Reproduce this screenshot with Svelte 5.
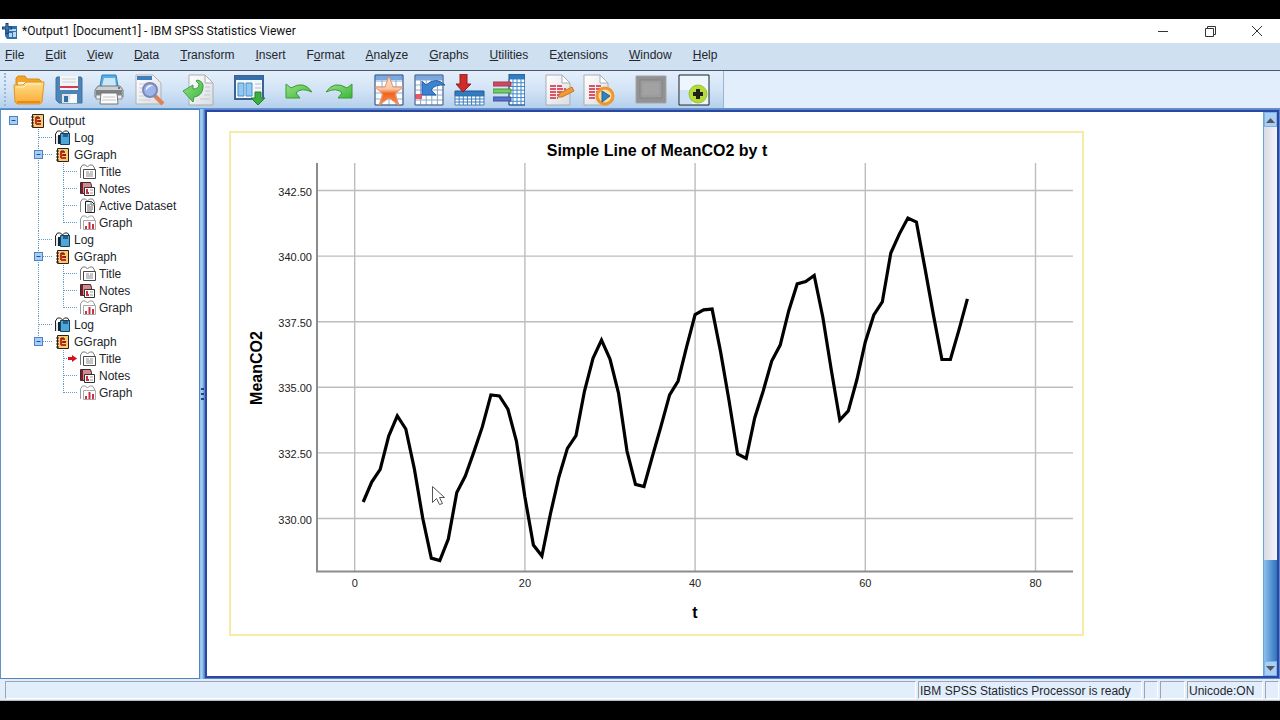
<script lang="ts">
  type Kind = 'book' | 'log' | 'title' | 'notes' | 'dataset' | 'graph';
  type Row = { label: string; kind: Kind; depth: number; last?: boolean; lastGroup?: boolean; current?: boolean };

  // the number is the index of the underlined letter
  const menus: [string, number][] = [
    ['File', 0], ['Edit', 0], ['View', 0], ['Data', 0], ['Transform', 0], ['Insert', 0], ['Format', 1],
    ['Analyze', 0], ['Graphs', 0], ['Utilities', 0], ['Extensions', 1], ['Window', 0], ['Help', 0],
  ];

  const toolGroups = [
    [['open', 'Open'], ['save', 'Save'], ['print', 'Print'], ['preview', 'Print preview']],
    [['export', 'Export']],
    [['recall', 'Recall dialogs']],
    [['undo', 'Undo'], ['redo', 'Redo']],
    [['goto', 'Go to data'], ['case', 'Go to case'], ['insert', 'Go to variable'], ['variables', 'Variables']],
    [['script', 'New script'], ['run', 'Run script']],
    [['select', 'Select last output'], ['designate', 'Designate window']],
  ];

  const rows: Row[] = [
    { label: 'Output', kind: 'book', depth: 0 },
    { label: 'Log', kind: 'log', depth: 1 },
    { label: 'GGraph', kind: 'book', depth: 1 },
    { label: 'Title', kind: 'title', depth: 2 },
    { label: 'Notes', kind: 'notes', depth: 2 },
    { label: 'Active Dataset', kind: 'dataset', depth: 2 },
    { label: 'Graph', kind: 'graph', depth: 2, last: true },
    { label: 'Log', kind: 'log', depth: 1 },
    { label: 'GGraph', kind: 'book', depth: 1 },
    { label: 'Title', kind: 'title', depth: 2 },
    { label: 'Notes', kind: 'notes', depth: 2 },
    { label: 'Graph', kind: 'graph', depth: 2, last: true },
    { label: 'Log', kind: 'log', depth: 1 },
    { label: 'GGraph', kind: 'book', depth: 1, last: true },
    { label: 'Title', kind: 'title', depth: 2, lastGroup: true, current: true },
    { label: 'Notes', kind: 'notes', depth: 2, lastGroup: true },
    { label: 'Graph', kind: 'graph', depth: 2, last: true, lastGroup: true },
  ];

  const indent = [28, 53, 78];

  const co2 = [
    330.63, 331.39, 331.87, 333.14, 333.91, 333.41, 331.9, 330.0, 328.49, 328.4, 329.22, 330.99,
    331.62, 332.53, 333.49, 334.71, 334.67, 334.17, 332.95, 330.82, 328.99, 328.57, 330.17, 331.58,
    332.67, 333.16, 334.86, 336.1, 336.8, 336.08, 334.78, 332.57, 331.3, 331.22, 332.38, 333.53,
    334.71, 335.24, 336.54, 337.77, 337.95, 337.98, 336.35, 334.48, 332.46, 332.29, 333.83, 334.86,
    336.0, 336.61, 337.91, 338.94, 339.03, 339.26, 337.68, 335.66, 333.75, 334.1, 335.28, 336.73,
    337.76, 338.25, 340.12, 340.84, 341.45, 341.3, 339.55, 337.76, 336.06, 336.06, 337.18, 338.37,
  ];

  const xTicks = [0, 20, 40, 60, 80];
  const yTicks = [342.5, 340, 337.5, 335, 332.5, 330];
  const sx = (t: number) => 123.7 + t * 8.51;
  const sy = (v: number) => 385.5 - (v - 330) * 26.24;
  const line = co2.map((v, i) => `${sx(i + 1).toFixed(1)},${sy(v).toFixed(1)}`).join(' ');
</script>

{#snippet grid(x: number, y: number, w: number, h: number, cols: number, rws: number, stroke: string)}
  {#each Array(cols + 1) as _, i}
    <path d="M{x + (w * i) / cols} {y}v{h}" {stroke} fill="none" />
  {/each}
  {#each Array(rws + 1) as _, i}
    <path d="M{x} {y + (h * i) / rws}h{w}" {stroke} fill="none" />
  {/each}
{/snippet}

{#snippet page()}
  <path d="M6 1h16l8 8v22H6z" fill="url(#paper)" stroke="#a9adb2" />
  <path d="M22 1v8h8z" fill="#fafafa" stroke="#a9adb2" />
{/snippet}

{#snippet toolIcon(name: string)}
  <svg width="32" height="32" viewBox="0 0 32 32" aria-hidden="true">
    {#if name === 'open'}
      <path d="M3 25V4l2-2h7l2 3h12l3 3v17z" fill="#f2a32a" stroke="#d98a1c" />
      <path d="M5 8h22v5H5z" fill="#fff3cf" />
      <path d="M1 11h9l3-3h18l-2 20-2 2H4l-2-2z" fill="url(#folder)" stroke="#e0952a" />
      <path d="M3 13h8l3-3h14" fill="none" stroke="#fff1c0" />
      <path d="M4 28h23" stroke="#e58a1d" stroke-width="2" />
    {:else if name === 'save'}
      <path d="M4 3h24l1 1v25H6l-3-3V4z" fill="#4d84b6" stroke="#44719c" />
      <path d="M7 2h18v14H7z" fill="#f4f5f7" />
      <path d="M9 5h14M9 8h14" stroke="#ccd3da" />
      <path d="M7 12h18v2H7z" fill="#d33b58" />
      <path d="M9 20h15v9H9z" fill="#dfe3e6" />
      <path d="M11 22h4v6h-4z" fill="#36709f" />
      <path d="M18 20h6v9h-8z" fill="#fafafa" />
    {:else if name === 'print'}
      <path d="M9 1h14l2 11H7z" fill="#58aee0" stroke="#2e83bd" />
      <path d="M11 4h11l1 8H9z" fill="#c9e8fa" />
      <path d="M5 12h22l3 4v7H2v-7z" fill="#cdcfd1" stroke="#74787c" />
      <path d="M3 16h26v5H3z" fill="#7d8286" />
      <path d="M3 21h26v4H3z" fill="#eceded" stroke="#8a8d90" />
      <path d="M8 19h16l1 11H7z" fill="#fbfbfb" stroke="#777" />
      <path d="M10 23h12M9 26h14" stroke="#c3c5c7" />
      <circle cx="26" cy="14" r="1" fill="#555" />
    {:else if name === 'preview'}
      <path d="M3 1h17l8 8v21H3z" fill="url(#paper)" stroke="#adb1b5" />
      <path d="M4 2h15v4H4z" fill="#3e7fc0" />
      <path d="M6 10h7M6 14h4M6 18h4M6 22h6M6 26h12" stroke="#c9ced4" />
      <path d="M22 22l8 8" stroke="#e37f54" stroke-width="4" />
      <path d="M20 20l3 3" stroke="#8c93ac" stroke-width="3" />
      <circle cx="17" cy="16" r="7" fill="#9bb6ed" stroke="#8087b4" stroke-width="2" />
      <path d="M13 14q3-5 7-2-4 0-7 5z" fill="#e8f1ff" />
    {:else if name === 'export'}
      {@render page()}
      <path d="M22 13h5M22 17h5M21 21h6M17 25h10" stroke="#c5c9cd" />
      <path d="M0 17l10-6v4q6 0 6-5l-3-3 1-1q7 1 6 8-1 8-9 9l-1 5z" fill="url(#green)" stroke="#3f9d48" />
    {:else if name === 'recall'}
      <path d="M2 2h28v23H2z" fill="#f4f8fd" stroke="#3e6290" stroke-width="2" />
      <path d="M2 2h28v4H2z" fill="#376fac" />
      <path d="M5 9h6v13H5zM13 9h6v13h-6z" fill="#8fc9f3" stroke="#4b8dc6" />
      <path d="M22 10h6M22 14h6" stroke="#a9bdd2" />
      <path d="M22 18h6v6h4l-7 7-7-7h4z" fill="#3dae40" stroke="#227d2a" />
    {:else if name === 'undo'}
      <path d="M3 10v14h14l-4-5q5-6 16-1-8-12-21-4z" fill="url(#green)" stroke="#3a9a32" />
    {:else if name === 'redo'}
      <path d="M29 10v14H15l4-5q-5-6-16-1 8-12 21-4z" fill="url(#green)" stroke="#3a9a32" />
    {:else if name === 'goto'}
      <path d="M2 1h28v30H2z" fill="#fff" />
      <path d="M2 1h28v5H2z" fill="#76a8e4" />
      {@render grid(2, 1, 28, 30, 4, 5, '#8fabd0')}
      <path d="M2 1h28v30H2z" fill="none" stroke="#405b83" />
      <path d="M16 2l4 11h10l-8 7 4 11-10-7-10 7 4-11-8-7h10z" fill="url(#star)" stroke="#e89163" />
    {:else if name === 'case'}
      <path d="M2 1h28v30H2z" fill="#fff" />
      <path d="M2 1h28v5H2z" fill="#76a8e4" />
      {@render grid(2, 1, 28, 30, 5, 6, '#8ba6ca')}
      <path d="M2 20h7v5H2z" fill="#ed5266" />
      <path d="M2 1h28v30H2z" fill="none" stroke="#526b91" />
      <path d="M9 7v14h14l-5-5q4-6 14-5-9-9-19 0z" fill="#3c82cf" stroke="#2860a9" />
    {:else if name === 'insert'}
      <path d="M2 17h29v5H2z" fill="#317bc0" stroke="#24568d" />
      <path d="M2 22h29v9H2z" fill="#fff" />
      {@render grid(2, 22, 29, 9, 7, 3, '#3c7fbc')}
      <path d="M7 0h7v10h4l-8 8-7-8h4z" fill="#cf2c2a" stroke="#8f1f20" />
    {:else if name === 'variables'}
      <path d="M16 0h16v31H16z" fill="#fff" />
      {@render grid(16, 5, 16, 26, 4, 7, '#3c87cb')}
      <path d="M16 0h16v5H16z" fill="#317bc0" />
      <path d="M16 0h16v31H16z" fill="none" stroke="#24568d" />
      <path d="M0 8h18v4H0z" fill="#d64460" stroke="#963f50" />
      <path d="M0 15h18v4H0z" fill="#72cd62" stroke="#4d9044" />
      <path d="M0 23h18v4H0z" fill="#5273cd" stroke="#3e539a" />
    {:else if name === 'script'}
      <path d="M3 1h16l8 8v22H3z" fill="url(#paper)" stroke="#a9adb2" />
      <path d="M19 1v8h8z" fill="#fff" stroke="#a9adb2" />
      <path d="M7 12h12M7 15h16M7 18h12M7 21h15M7 24h8" stroke="#dc5366" stroke-width="2" stroke-dasharray="6 1" />
      <path d="M15 23l2-4 12-6 2 4-12 6z" fill="#f39a32" stroke="#c87628" />
    {:else if name === 'run'}
      <path d="M1 1h16l8 8v22H1z" fill="url(#paper)" stroke="#a9adb2" />
      <path d="M17 1v8h8z" fill="#fff" stroke="#a9adb2" />
      <path d="M6 12h12M6 15h12M6 18h8M6 21h6M6 24h6" stroke="#dc5366" stroke-width="2" stroke-dasharray="6 1" />
      <circle cx="22" cy="22" r="8" fill="#f8dba3" stroke="#ed962c" stroke-width="3" />
      <path d="M19 17l8 5-8 6z" fill="#2e82bd" stroke="#246494" />
    {:else if name === 'select'}
      <path d="M1 2h30v27H1z" fill="#929292" stroke="#a5a5a5" />
      <path d="M5 6h22v18H5z" fill="#9c9c9c" stroke="#848484" />
      <path d="M8 9h16v12H8z" fill="#a2a2a2" />
    {:else if name === 'designate'}
      <path d="M1 1h30v30H1z" fill="#edf5fd" stroke="#17202b" />
      <path d="M2 16h12v14H2z" fill="#cfe2f5" />
      <circle cx="20" cy="20" r="9" fill="#b5dc36" stroke="#9bbf38" />
      <path d="M18 15h4v3h3v4h-3v3h-4v-3h-3v-4h3z" fill="#1d2118" />
    {/if}
  </svg>
{/snippet}

{#snippet binder(stroke: string)}
  <path d="M1.500 14V4l2-3h3l2 2 2-2h3l2 3v2" fill="#fff" {stroke} />
{/snippet}

{#snippet treeIcon(kind: Kind)}
  <svg width="17" height="16" viewBox="0 0 17 16" aria-hidden="true">
    {#if kind === 'book'}
      <path d="M3.500 1.500h11v13h-11z" fill="#f8cb74" stroke="#2b2417" />
      <path d="M2 4h3M2 7h3M2 10h3M2 13h3" stroke="#2b2417" />
      <path d="M7 4v7M7 5h4M7 8h5M7 11h5" fill="none" stroke="#c4301f" stroke-width="2" />
      <path d="M7 4h3M9 8h3" stroke="#3b2017" />
    {:else if kind === 'log'}
      {@render binder('#222')}
      <path d="M2 6h4v8H2z" fill="#d6e9f4" />
      <path d="M6.500 3.500h9v11h-9z" fill="#4fa7d8" stroke="#16425f" />
      <path d="M9 4h5v3H9z" fill="#24618c" />
      <path d="M5 5v9" stroke="#16252e" stroke-width="2" />
    {:else if kind === 'title'}
      {@render binder('#777')}
      <path d="M4.500 5.500h12v9h-12z" fill="#fff" stroke="#4a4a4a" />
      <path d="M7 8h3M11 8h3M7 10h7M7 12h7" stroke="#8a8a8a" />
    {:else if kind === 'notes'}
      <path d="M1.500 1.500h10l1 3v8h-11z" fill="#d58a90" stroke="#3a2a2d" />
      <path d="M3 2v11" stroke="#7c1e29" stroke-width="2" />
      <path d="M5.500 6.500h10v8h-10z" fill="#fff" stroke="#333" />
      <path d="M8 8v4M7 12h3" stroke="#d02c3a" stroke-width="2" />
      <path d="M11 9h3M11 12h3" stroke="#999" />
    {:else if kind === 'dataset'}
      {@render binder('#888')}
      <path d="M6.500 3.500h6l3 3v8h-9z" fill="#fff" stroke="#222" />
      <path d="M12 3v4h4M8 7h3M8 9h6M8 11h6M8 13h5" fill="none" stroke="#666" />
    {:else}
      {@render binder('#999')}
      <path d="M4.500 5.500h12v9h-12z" fill="#fff" stroke="#aaa" />
      <path d="M7 14v-3M10.500 14V7M14 14V9" stroke="#c93442" stroke-width="2" />
    {/if}
  </svg>
{/snippet}

{#snippet guide(row: Row)}
  <svg width={indent[row.depth]} height="17" viewBox="0 0 {indent[row.depth]} 17" aria-hidden="true">
    <g stroke="#5c9fd0" stroke-dasharray="1 1" fill="none">
      {#if row.depth === 1}
        <path d="M37.500 0v{row.last ? 9 : 17}M38 8.500h13" />
      {:else if row.depth === 2}
        {#if !row.lastGroup}<path d="M37.500 0v17" />{/if}
        <path d="M62.500 0v{row.last ? 9 : 17}M63 8.500h14" />
      {/if}
    </g>
    {#if row.kind === 'book'}
      {@const x = row.depth === 0 ? 8.5 : 33.5}
      <rect {x} y="4.500" width="8" height="8" fill="#a9cdf5" stroke="#4b82c4" />
      <path d="M{x + 2} 8.500h4" stroke="#1d4f96" />
    {/if}
    {#if row.current}
      <path d="M67 7h4V5l5 3.500-5 3.500v-2h-4z" fill="#d9101c" />
    {/if}
  </svg>
{/snippet}

<svg class="defs" width="0" height="0" aria-hidden="true">
  <defs>
    <linearGradient id="paper" x2="1" y2="1">
      <stop stop-color="#fff" /><stop offset="1" stop-color="#d9dde1" />
    </linearGradient>
    <linearGradient id="folder" x2="0" y2="1">
      <stop stop-color="#ffe08a" /><stop offset="1" stop-color="#fba932" />
    </linearGradient>
    <linearGradient id="green" x2="1" y2="1">
      <stop stop-color="#9be087" /><stop offset="1" stop-color="#38b83a" />
    </linearGradient>
    <linearGradient id="star" x2="0" y2="1">
      <stop stop-color="#fde3d2" /><stop offset="0.45" stop-color="#fac5a3" /><stop offset="0.6" stop-color="#f3641b" /><stop offset="1" stop-color="#f58d55" />
    </linearGradient>
  </defs>
</svg>

<div class="screen">
  <header class="titlebar">
    <svg width="16" height="16" viewBox="0 0 16 16" aria-hidden="true">
      <path d="M3 3h12v13H5l-2-3z" fill="#2d70ad" />
      <path d="M7 6h7v2H7zM7 10h3v4H7zM11 9h3v5h-3z" fill="#b7d8f1" />
      <path d="M5 0v11M0 5h10" stroke="#173d6e" stroke-width="3" />
      <path d="M5 1v9M1 5h8" stroke="#528cc4" />
    </svg>
    <h1>*Output1 [Document1] - IBM SPSS Statistics Viewer</h1>
    <div class="window-buttons">
      <button aria-label="Minimize"><svg width="12" height="12"><path d="M1 6.500h10" /></svg></button>
      <button aria-label="Restore"><svg width="12" height="12"><path d="M1.500 3.500h8v8h-8zM3.500 3v-1.500h8v8H10" /></svg></button>
      <button aria-label="Close"><svg width="12" height="12"><path d="M1 1l10 10M11 1L1 11" /></svg></button>
    </div>
  </header>

  <nav class="menubar">
    {#each menus as [label, key]}
      <button>{label.slice(0, key)}<u>{label[key]}</u>{label.slice(key + 1)}</button>
    {/each}
  </nav>

  <div class="toolbar-row">
    <div class="toolbar">
      <span class="grip"></span>
      {#each toolGroups as group}
        <div class="tool-group">
          {#each group as [name, label]}
            <button aria-label={label}>{@render toolIcon(name)}</button>
          {/each}
        </div>
      {/each}
    </div>
  </div>

  <div class="workspace">
    <aside class="outline">
      {#each rows as row}
        <button class="tree-row">
          {@render guide(row)}
          {@render treeIcon(row.kind)}
          <span>{row.label}</span>
        </button>
      {/each}
    </aside>

    <div class="splitter">
      <svg width="5" height="14"><path d="M1 2h3M1 7h3M1 12h3" stroke="#24477d" stroke-width="2" /></svg>
    </div>

    <main class="viewer">
      <div class="document">
        <figure class="chart">
          <svg width="851" height="501" viewBox="0 0 851 501" role="img" aria-label="Simple Line of MeanCO2 by t">
            <text class="heading" x="426" y="23">Simple Line of MeanCO2 by t</text>
            {#each xTicks as t}
              <path class="grid-line" d="M{sx(t)} 30V438" />
              <text class="tick" x={sx(t)} y="454" text-anchor="middle">{t}</text>
            {/each}
            {#each yTicks as v}
              <path class="grid-line" d="M86 {sy(v)}H842" />
              <text class="tick" x="81" y={sy(v) + 5} text-anchor="end">{v.toFixed(2)}</text>
            {/each}
            <path class="axis" d="M86 30V438.500H842" />
            <polyline class="series" points={line} />
            <text class="heading" transform="translate(31 235) rotate(-90)">MeanCO2</text>
            <text class="heading" x="464" y="485">t</text>
            <path class="cursor" d="M201.500 353.500v16l4-4 3 6 3-1-3-6h5z" />
          </svg>
        </figure>
      </div>
      <div class="scrollbar">
        <button aria-label="Scroll up"><svg width="9" height="6"><path d="M0 6l4.500-5L9 6z" /></svg></button>
        <div class="track"><div class="thumb"></div></div>
        <button aria-label="Scroll down"><svg width="9" height="6"><path d="M0 0l4.500 5L9 0z" /></svg></button>
      </div>
    </main>
  </div>

  <footer class="statusbar">
    <span class="cell grow"></span>
    <span class="cell message">IBM SPSS Statistics Processor is ready</span>
    <span class="cell narrow"></span>
    <span class="cell small"></span>
    <span class="cell unicode">Unicode:ON</span>
    <span class="cell narrow"></span>
  </footer>
</div>

<style>
  :global(body) {
    margin: 0;
    background: #000;
  }

  .defs {
    position: absolute;
  }

  .screen {
    box-sizing: border-box;
    min-height: 100vh;
    padding: 19px 0;
    display: flex;
    flex-direction: column;
    background: #000;
    color: #23262d;
    font: 12px/16px "Liberation Sans", Arial, sans-serif;
  }

  button {
    margin: 0;
    padding: 0;
    border: 0;
    background: none;
    color: inherit;
    font: inherit;
  }

  svg {
    display: block;
    flex: none;
  }

  .titlebar {
    display: flex;
    align-items: center;
    height: 24px;
    padding-left: 2px;
    gap: 4px;
    background: #fff;
  }

  .titlebar h1 {
    flex: 1;
    margin: 0;
    font: 12px/16px Roboto, "Noto Sans", sans-serif;
    color: #111;
  }

  .window-buttons {
    display: flex;
  }

  .window-buttons button {
    width: 47px;
    height: 24px;
    display: flex;
    align-items: center;
    justify-content: center;
  }

  .window-buttons path {
    fill: none;
    stroke: #333;
  }

  .menubar {
    display: flex;
    gap: 21px;
    height: 28px;
    box-sizing: border-box;
    padding: 4px 5px;
    background: #cfe0f0;
    border-bottom: 1px solid #4c5670;
  }

  .menubar button {
    height: 16px;
  }

  .toolbar-row {
    display: flex;
    background: #e2eefb;
    border-bottom: 1px solid #5f94d0;
  }

  .toolbar {
    display: flex;
    align-items: center;
    gap: 10px;
    height: 37px;
    padding-right: 9px;
    border-right: 1px solid #9fb5cf;
    background: linear-gradient(#e4effb, #d3e4f6 50%, #b5d0ec);
  }

  .grip {
    width: 2px;
    height: 33px;
    margin: 0 -7px 0 4px;
    border-left: 2px dotted #9db8d6;
    box-sizing: border-box;
  }

  .tool-group {
    display: flex;
  }

  .tool-group:last-child {
    gap: 3px;
    padding-left: 2px;
  }

  .tool-group button {
    width: 40px;
    height: 34px;
    display: flex;
    align-items: center;
    justify-content: center;
  }

  .workspace {
    flex: 1;
    display: flex;
    background: #e2eefb;
  }

  .outline {
    width: 200px;
    box-sizing: border-box;
    padding-top: 2px;
    border: 1px solid #4f86bd;
    border-left-color: #5f94cc;
    background: #fff;
  }

  .tree-row {
    width: 100%;
    height: 17px;
    display: flex;
    align-items: center;
    text-align: left;
    white-space: nowrap;
  }

  .tree-row span {
    margin-left: 3px;
  }

  .splitter {
    width: 4px;
    display: flex;
    align-items: center;
    justify-content: center;
    background: linear-gradient(90deg, #8fc0ea, #a9d3f5 50%, #5b93cf);
  }

  .viewer {
    flex: 1;
    display: flex;
    border: 1px solid #5b86cc;
    outline: 2px solid #2c46a4;
    outline-offset: -3px;
    padding: 2px;
    background: #fff;
  }

  .document {
    flex: 1;
    padding: 19px 22px;
  }

  .chart {
    margin: 0;
    width: max-content;
    border: 2px solid #f7eba8;
  }

  .heading {
    font-weight: 700;
    font-size: 16px;
    text-anchor: middle;
    fill: #000;
  }

  .tick {
    font-size: 11px;
    fill: #222;
  }

  .grid-line {
    stroke: #bdbdbd;
    stroke-width: 1.4;
  }

  .axis {
    fill: none;
    stroke: #8c8c8c;
    stroke-width: 2;
  }

  .series {
    fill: none;
    stroke: #000;
    stroke-width: 3.2;
  }

  .cursor {
    fill: #fff;
    stroke: #555;
  }

  .scrollbar {
    width: 13px;
    display: flex;
    flex-direction: column;
    border-left: 1px solid #68a8dc;
  }

  .scrollbar button {
    height: 15px;
    display: flex;
    align-items: center;
    justify-content: center;
    background: #a9cff5;
    border: 1px solid #7eb2e4;
  }

  .scrollbar button path {
    fill: #52585f;
  }

  .track {
    flex: 1;
    display: flex;
    flex-direction: column;
    justify-content: flex-end;
    background: linear-gradient(90deg, #d9dae4, #f4f4f8);
  }

  .thumb {
    height: 19%;
    background: linear-gradient(90deg, #8dc0ee, #4a8acb 70%, #3472b8);
  }

  .statusbar {
    display: flex;
    gap: 2px;
    height: 22px;
    box-sizing: border-box;
    padding: 2px 1px 1px 5px;
    border-bottom: 1px solid #b9bec6;
    background: #e2eefb;
  }

  .cell {
    box-sizing: border-box;
    padding: 1px 1px 0;
    border: 1px solid #9fa5ae;
    border-right-color: #fff;
    border-bottom-color: #fff;
    white-space: nowrap;
  }

  .grow {
    flex: 1;
  }

  .message {
    width: 224px;
  }

  .narrow {
    width: 14px;
  }

  .small {
    width: 25px;
  }

  .unicode {
    width: 76px;
  }
</style>
